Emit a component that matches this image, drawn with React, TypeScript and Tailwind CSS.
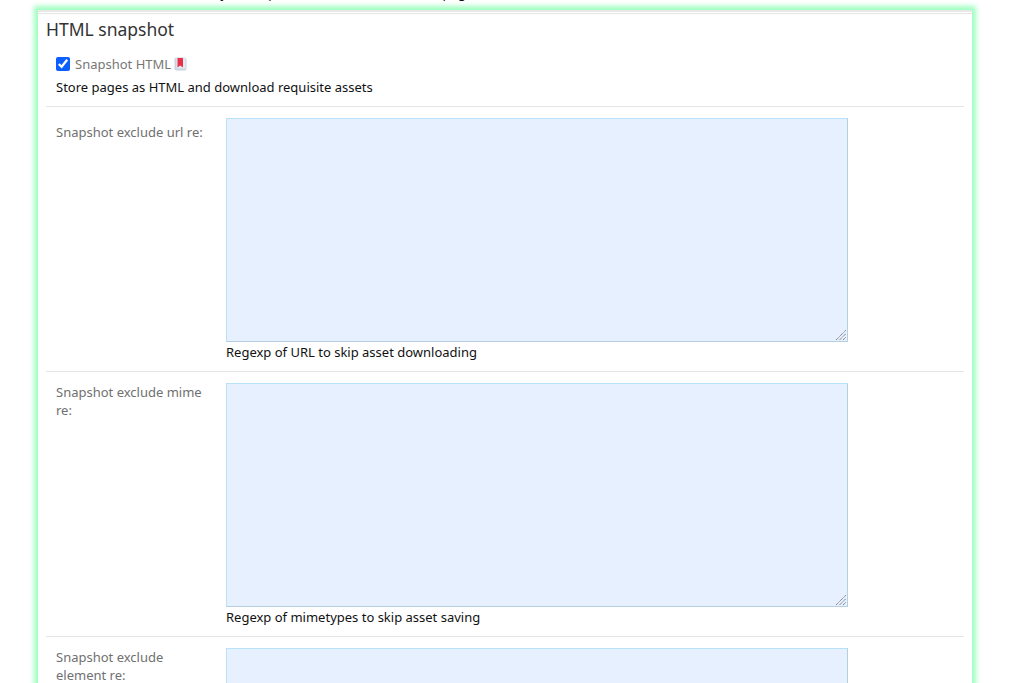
const fontStack = "font-['Noto_Sans','Open_Sans',sans-serif]"

type Field = {
  label: string
  help?: string
  labelClass: string
}

const fields: Field[] = [
  { label: 'Snapshot exclude url re:', help: 'Regexp of URL to skip asset downloading', labelClass: 'pt-[5px]' },
  { label: 'Snapshot exclude mime re:', help: 'Regexp of mimetypes to skip asset saving', labelClass: 'pt-0' },
  { label: 'Snapshot exclude element re:', labelClass: 'pt-0' },
]

function BookIcon() {
  return (
    <svg className="ml-[3px] h-[14px] w-[13px]" viewBox="0 0 13 14">
      <rect x="0.5" y="0.5" width="12" height="13" rx="2" fill="#c9d4e0" />
      <rect x="2.5" y="1" width="9" height="10.5" fill="#e6ebf1" />
      <path d="M3.5 1H9v9.5L6.2 8.6 3.5 10.5z" fill="#e8304a" />
    </svg>
  )
}

function ResizeHandle() {
  return (
    <svg className="pointer-events-none absolute top-[212px] left-[610px] h-[10px] w-[10px]" viewBox="0 0 10 10">
      <path d="M0 10 10 0M3.5 10 10 3.5M7 10 10 7" stroke="#6f6f6f" strokeWidth="1" strokeDasharray="1.2 0.6" fill="none" />
    </svg>
  )
}

function FieldRow({ field }: { field: Field }) {
  return (
    <div className="flex border-b border-[#e5e5e5] pt-[11px] pb-[10px]">
      <label className={`w-[180px] shrink-0 px-[10px] text-[13px] leading-[18px] text-[#707070] ${field.labelClass}`}>
        {field.label}
      </label>
      <div className="flex flex-col">
        <div className="relative">
          <textarea className="block h-[224px] w-[622px] resize-none border border-t-[#b8e2f8] border-l-[#b8e2f8] border-r-[#b5cfe0] border-b-[#b5cfe0] bg-[#e6f0ff] outline-none" />
          <ResizeHandle />
        </div>
        {field.help && <p className="mt-[1px] text-[13px] leading-[18px] text-[#111]">{field.help}</p>}
      </div>
    </div>
  )
}

export default function App() {
  return (
    <div className={`h-[683px] overflow-hidden bg-white pl-[38px] pr-[52px] ${fontStack}`}>
      <div className="-mt-[16px] mb-[10px] h-[16px] pl-[160px] text-[13px] leading-[18px] whitespace-nowrap text-[#111]">
        Subject to split into small or whole html pages
      </div>
      <div className="border-t-[2px] border-[#e8e8e8] bg-white px-[8px] shadow-[0_0_5px_4px_#9fffbf]">
        <div className="-mx-[8px] mt-[1px] border-t border-[#e5e5e5]" />
        <h2 className="pt-[2px] text-[17.5px] leading-[26px] font-normal text-[#333]">HTML snapshot</h2>
        <div className="border-b border-[#e5e5e5] pt-[10px] pb-[10px] pl-[10px]">
          <div className="flex h-[24px] items-center">
            <input type="checkbox" defaultChecked className="h-[14px] w-[14px] accent-[#0b5fff]" />
            <label className="ml-[5px] text-[13px] leading-[18px] text-[#777]">Snapshot HTML</label>
            <BookIcon />
          </div>
          <p className="mt-[2px] text-[13px] leading-[18px] text-[#111]">Store pages as HTML and download requisite assets</p>
        </div>
        {fields.map((field) => (
          <FieldRow key={field.label} field={field} />
        ))}
      </div>
    </div>
  )
}
